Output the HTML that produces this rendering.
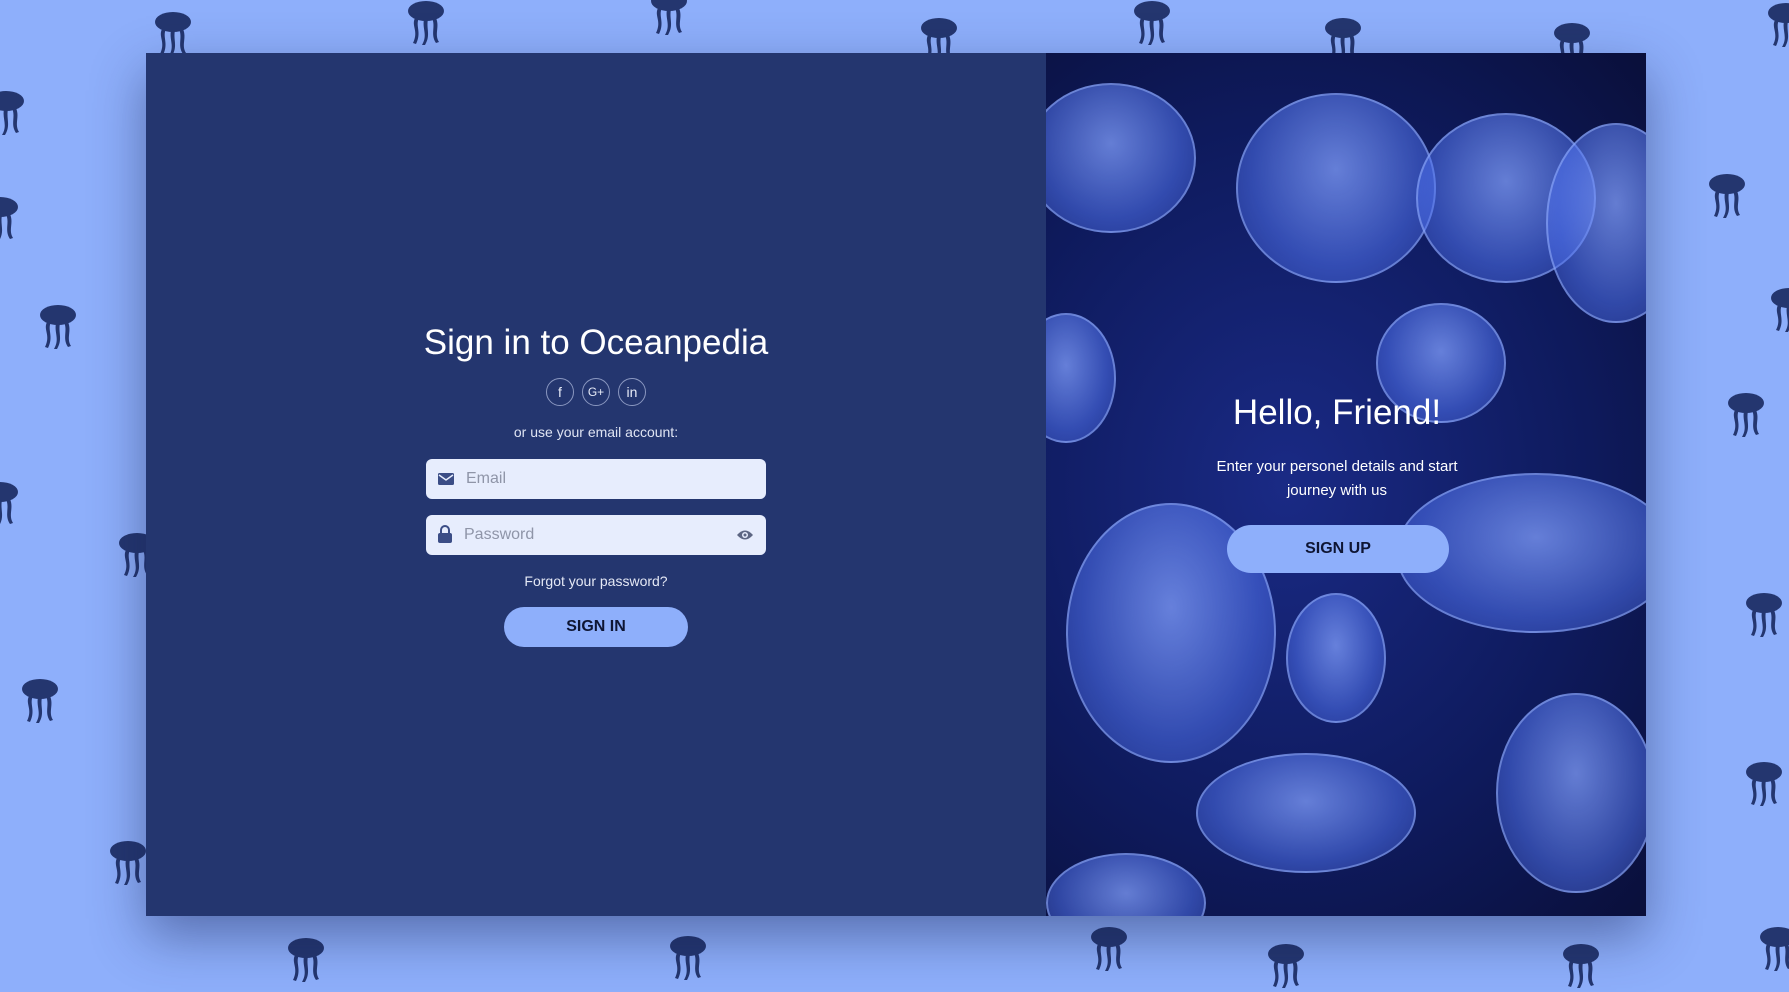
<!DOCTYPE html>
<html><head><meta charset="utf-8"><style>
*{margin:0;padding:0;box-sizing:border-box}
body{width:1789px;height:978px;overflow:hidden;background:#8eaffb;font-family:"Liberation Sans",sans-serif;position:relative}
.jf{position:absolute;width:40px;height:48px}
.card{position:absolute;left:146px;top:53px;width:1500px;height:863px;box-shadow:0 20px 50px rgba(20,30,80,.45);overflow:hidden}
.left{position:absolute;left:0;top:0;width:900px;height:863px;background:#24366f;color:#fff}
.right{position:absolute;left:900px;top:0;width:600px;height:863px;background:radial-gradient(ellipse at 40% 50%,#1a2a85 0%,#0e1a5c 60%,#0a0f3a 100%);color:#fff;overflow:hidden}
.c{position:absolute;text-align:center}
.soc{position:absolute;width:28px;height:28px;border:1px solid #8a97c0;border-radius:50%;font-size:14px;line-height:26px;text-align:center;color:#e8ecf8}
.inp{position:absolute;left:280px;width:340px;height:40px;background:#e7edfd;border-radius:6px}
.inp span{position:absolute;left:40px;top:11px;font-size:16px;color:#8f95a8}
.btn{position:absolute;background:#8eaffb;border-radius:24px;color:#0e1533;font-size:16px;font-weight:bold;text-align:center}
.bl{position:absolute;border-radius:50%;background:radial-gradient(ellipse at 50% 40%,rgba(130,160,255,.75),rgba(80,115,240,.55) 60%,rgba(70,100,230,.3));border:2px solid rgba(160,185,255,.5)}
</style></head><body>
<svg width="0" height="0" style="position:absolute"><defs><g id="j" fill="#24366f"><ellipse cx="20" cy="10" rx="18" ry="10"/><path d="M9 17 C5 25 13 30 7 42 L10 43 C16 31 9 25 13 17Z M18 18 C16 28 22 34 16 44 L19 44 C25 34 20 28 22 18Z M26 17 C30 26 24 33 30 42 L33 41 C28 33 34 26 30 17Z"/></g></defs></svg>
<div id="bgj"></div>
<script>
var p=[[152,28],[373,18],[586,10],[823,33],[1010,18],[1177,33],[1378,38],[1565,20],[5,97],[51,285],[1514,170],[1530,362],[1546,537],[1546,685],[35,613],[112,755],[268,840],[603,838],[972,830],[1127,845],[1386,845],[1558,830],[0,440],[120,485],[1568,270],[0,190]];
var h='';p.forEach(function(a){h+='<svg class="jf" style="left:'+(a[0]*1.141-20)+'px;top:'+(a[1]*1.141-20)+'px" viewBox="0 0 40 48"><use href="#j"/></svg>'});
document.getElementById('bgj').innerHTML=h;
</script>
<div class="card">
<div class="left">
<div class="c" style="left:0;width:900px;top:270px;font-size:35px">Sign in to Oceanpedia</div>
<div class="soc" style="left:400px;top:325px">f</div>
<div class="soc" style="left:436px;top:325px;font-size:12px">G+</div>
<div class="soc" style="left:472px;top:325px">in</div>
<div class="c" style="left:0;width:900px;top:371px;font-size:14px;color:#dfe4f3">or use your email account:</div>
<div class="inp" style="top:406px"><svg style="position:absolute;left:12px;top:14px" width="16" height="12" viewBox="0 0 16 12"><rect width="16" height="12" rx="1.5" fill="#3b4d86"/><path d="M1 2 L8 7 L15 2" stroke="#e7edfd" stroke-width="1.5" fill="none"/></svg><span>Email</span></div>
<div class="inp" style="top:462px"><svg style="position:absolute;left:12px;top:10px" width="14" height="18" viewBox="0 0 14 18"><path d="M3 8 V5 a4 4 0 0 1 8 0 V8" stroke="#3b4d86" stroke-width="2" fill="none"/><rect y="8" width="14" height="10" rx="2" fill="#3b4d86"/></svg><span style="left:38px">Password</span><svg style="position:absolute;right:12px;top:14px" width="18" height="12" viewBox="0 0 18 12"><path d="M1 6 Q9 -3 17 6 Q9 15 1 6Z" fill="#5d6683"/><circle cx="9" cy="6" r="3" fill="#e7edfd"/><circle cx="9" cy="6" r="1.5" fill="#5d6683"/></svg></div>
<div class="c" style="left:0;width:900px;top:520px;font-size:14px;color:#e4e8f5">Forgot your password?</div>
<div class="btn" style="left:358px;top:554px;width:184px;height:40px;line-height:40px">SIGN IN</div>
</div>
<div class="right">
<div class="bl" style="left:-20px;top:30px;width:170px;height:150px"></div>
<div class="bl" style="left:190px;top:40px;width:200px;height:190px"></div>
<div class="bl" style="left:370px;top:60px;width:180px;height:170px"></div>
<div class="bl" style="left:500px;top:70px;width:140px;height:200px"></div>
<div class="bl" style="left:20px;top:450px;width:210px;height:260px"></div>
<div class="bl" style="left:350px;top:420px;width:280px;height:160px"></div>
<div class="bl" style="left:150px;top:700px;width:220px;height:120px"></div>
<div class="bl" style="left:450px;top:640px;width:160px;height:200px"></div>
<div class="bl" style="left:330px;top:250px;width:130px;height:120px"></div>
<div class="bl" style="left:-30px;top:260px;width:100px;height:130px"></div>
<div class="bl" style="left:240px;top:540px;width:100px;height:130px"></div>
<div class="bl" style="left:0px;top:800px;width:160px;height:100px"></div>
<div class="c" style="left:-9px;width:600px;top:340px;font-size:35px">Hello, Friend!</div>
<div class="c" style="left:-9px;width:600px;top:402px;font-size:15px;line-height:24px">Enter your personel details and start<br>journey with us</div>
<div class="btn" style="left:181px;top:472px;width:222px;height:48px;line-height:48px">SIGN UP</div>
</div>
</div>
</body></html>
